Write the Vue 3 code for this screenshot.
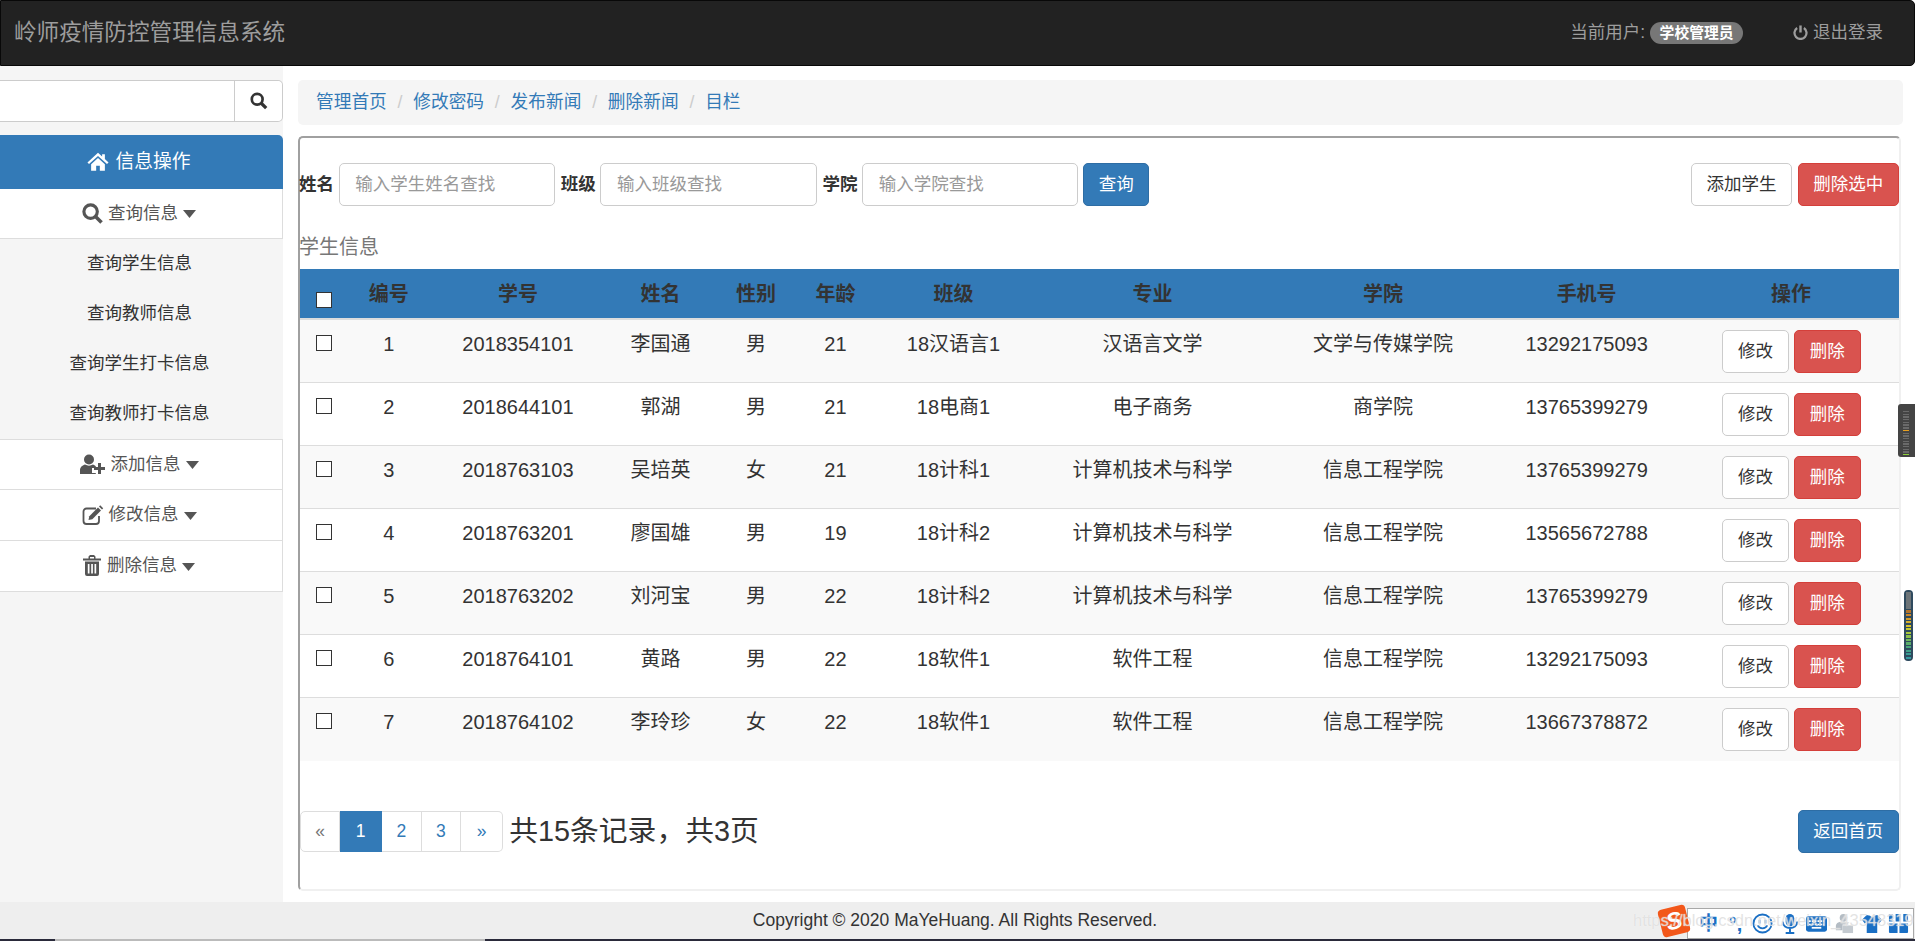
<script setup>
const crumbs = ['管理首页', '修改密码', '发布新闻', '删除新闻', '目栏']
const subItems = ['查询学生信息', '查询教师信息', '查询学生打卡信息', '查询教师打卡信息']
const heads = ['编号', '学号', '姓名', '性别', '年龄', '班级', '专业', '学院', '手机号', '操作']
const widths = [43.6, 90.2, 168.4, 116.6, 74.4, 84.6, 151.6, 246.2, 214.8, 192.6, 216]
const rows = [
  [1, '2018354101', '李国通', '男', 21, '18汉语言1', '汉语言文学', '文学与传媒学院', '13292175093'],
  [2, '2018644101', '郭湖', '男', 21, '18电商1', '电子商务', '商学院', '13765399279'],
  [3, '2018763103', '吴培英', '女', 21, '18计科1', '计算机技术与科学', '信息工程学院', '13765399279'],
  [4, '2018763201', '廖国雄', '男', 19, '18计科2', '计算机技术与科学', '信息工程学院', '13565672788'],
  [5, '2018763202', '刘河宝', '男', 22, '18计科2', '计算机技术与科学', '信息工程学院', '13765399279'],
  [6, '2018764101', '黄路', '男', 22, '18软件1', '软件工程', '信息工程学院', '13292175093'],
  [7, '2018764102', '李玲珍', '女', 22, '18软件1', '软件工程', '信息工程学院', '13667378872']
]
const meter1 = [0,1,2,3,4,5,6,7,8,9,10,11,12,13,14,15,16].map(i => i === 7 ? '#e8a020' : i === 16 ? '#8ccf3a' : '#6a6a6a')
const meter2 = ['#b5742a','#c9852a','#d29a2a','#d6ad2a','#d6c22a','#c4c92f','#a8c83a','#8cc04a','#6fb85a','#5aae6a','#48a67a','#3ea088','#389c94','#349aa0']
</script>

<template>
  <div class="page">
    <header class="topbar">
      <div class="brand">岭师疫情防控管理信息系统</div>
      <div class="user">当前用户:<span class="badge">学校管理员</span></div>
      <div class="logout">
        <svg class="power" viewBox="0 0 16 16"><path d="M4.4 3.2a6.4 6.4 0 1 0 7.2 0" fill="none" stroke="#9d9d9d" stroke-width="2.4"/><path d="M8 0.500v7.500" stroke="#9d9d9d" stroke-width="2.600"/></svg>
        退出登录
      </div>
    </header>

    <div class="body">
      <aside class="side">
        <div class="side-inner">
          <div class="side-search">
            <input class="side-input" type="text" />
            <button class="side-btn">
              <svg class="ic-s" viewBox="0 0 20 20"><circle cx="8" cy="8" r="6" fill="none" stroke="#333" stroke-width="3"/><path d="M12.5 12.5L18 18" stroke="#333" stroke-width="3.6"/></svg>
            </button>
          </div>
          <div class="side-head">
            <svg class="ic-home" viewBox="0 0 24 20"><path fill="#fff" d="M12 0.5L0.5 11l1.7 1.8L12 4l9.8 8.8 1.7-1.8-4-3.7V2h-3v2.6z"/><path fill="#fff" d="M4.5 13L12 6.2 19.5 13v7H14v-5.5h-4V20H4.5z"/></svg>
            信息操作
          </div>
          <div class="side-row">
            <svg class="ic-q" viewBox="0 0 20 20"><circle cx="8.2" cy="8.2" r="6.4" fill="none" stroke="#555" stroke-width="3"/><path d="M12.6 12.6L18.6 18.6" stroke="#555" stroke-width="3.4"/></svg>
            查询信息
            <svg class="caret" viewBox="0 0 13 8"><path d="M0 0h13L6.5 8z" fill="#555"/></svg>
          </div>
          <div class="side-sub" v-for="s in subItems" :key="s">{{ s }}</div>
          <div class="side-row tall first">
            <svg class="ic-add" viewBox="0 0 26 20"><circle cx="9" cy="5.5" r="5" fill="#555"/><path fill="#555" d="M0 20v-4c0-3 3-5 5-5.5 2.500 1.500 5.500 1.500 8 0 1 .3 2 1 2.800 1.800V14H12v5h3.800v1z"/><path d="M14 14.500h11M19.500 9v11" stroke="#555" stroke-width="3"/></svg>
            添加信息
            <svg class="caret" viewBox="0 0 13 8"><path d="M0 0h13L6.500 8z" fill="#555"/></svg>
          </div>
          <div class="side-row tall">
            <svg class="ic-edit" viewBox="0 0 22 20"><path d="M14 3.500H4.500a3 3 0 0 0-3 3v9.500a3 3 0 0 0 3 3H14a3 3 0 0 0 3-3v-5" fill="none" stroke="#555" stroke-width="1.800"/><path fill="#555" d="M6.500 15l.8-3.800L16 2.500l3 3-8.700 8.700z"/><path fill="#555" d="M17 1.500l1.200-1.200 3 3L20 4.500z"/></svg>
            修改信息
            <svg class="caret" viewBox="0 0 13 8"><path d="M0 0h13L6.500 8z" fill="#555"/></svg>
          </div>
          <div class="side-row tall">
            <svg class="ic-trash" viewBox="0 0 18 21"><path fill="#555" d="M0 3.500h5.500V1.500L7 0h4l1.500 1.500v2H18v2H0zM7 3.500h4V2H7z"/><path fill="#555" fill-rule="evenodd" d="M2 6.500h14V19a2 2 0 0 1-2 2H4a2 2 0 0 1-2-2zM4.800 9v9.500h1.700V9zM8.200 9v9.500h1.700V9zM11.500 9v9.500h1.700V9z"/></svg>
            删除信息
            <svg class="caret" viewBox="0 0 13 8"><path d="M0 0h13L6.500 8z" fill="#555"/></svg>
          </div>
        </div>
      </aside>

      <main class="main">
        <nav class="crumb">
          <template v-for="(c, i) in crumbs" :key="c">
            <span v-if="i" class="sep">/</span>
            <a class="link">{{ c }}</a>
          </template>
        </nav>

        <section class="panel">
          <div class="filters">
            <label class="lab">姓名</label>
            <input class="field" placeholder="输入学生姓名查找" />
            <label class="lab">班级</label>
            <input class="field" placeholder="输入班级查找" />
            <label class="lab">学院</label>
            <input class="field" placeholder="输入学院查找" />
            <button class="btn primary query">查询</button>
            <button class="btn plain wide push">添加学生</button>
            <button class="btn danger wide">删除选中</button>
          </div>

          <div class="title">学生信息</div>

          <table class="grid">
            <colgroup>
              <col v-for="(w, i) in widths" :key="i" :style="{ width: w + 'px' }" />
            </colgroup>
            <thead>
              <tr>
                <th class="cb-cell"><input class="cb head-cb" type="checkbox" /></th>
                <th v-for="h in heads" :key="h">{{ h }}</th>
              </tr>
            </thead>
            <tbody>
              <tr v-for="r in rows" :key="r[0]">
                <td class="cb-cell"><input class="cb" type="checkbox" /></td>
                <td v-for="(v, i) in r" :key="i">{{ v }}</td>
                <td>
                  <div class="ops">
                    <button class="btn plain op">修改</button>
                    <button class="btn danger op">删除</button>
                  </div>
                </td>
              </tr>
            </tbody>
          </table>

          <div class="bottom">
            <ul class="pager">
              <li class="muted">«</li>
              <li class="on">1</li>
              <li>2</li>
              <li>3</li>
              <li>»</li>
            </ul>
            <span class="total">共15条记录，共3页</span>
            <button class="btn primary wide push">返回首页</button>
          </div>
        </section>
      </main>
    </div>

    <footer class="foot">
      <div class="copy">Copyright © 2020 MaYeHuang. All Rights Reserved.</div>
      <div class="strip"><span class="s1"></span><span class="s2"></span><span class="s3"></span></div>
    </footer>

    <div class="meter m1"><i v-for="(c, i) in meter1" :key="i" :style="{ background: c }"></i></div>
    <div class="meter m2"><b></b><i v-for="(c, i) in meter2" :key="i" :style="{ background: c }"></i></div>

    <div class="ime">
      <span class="ime-zh">中</span>
      <span class="ime-p">°,</span>
      <svg class="ime-i" viewBox="0 0 22 22"><circle cx="11" cy="11" r="9.500" fill="#fff" stroke="#1a6fc4" stroke-width="2"/><path d="M8 7v4M14 7v4" stroke="#1a6fc4" stroke-width="2"/><path d="M6 13c2 4 8 4 10 0" fill="none" stroke="#1a6fc4" stroke-width="1.800"/></svg>
      <svg class="ime-i" viewBox="0 0 22 22"><rect x="7" y="1" width="9" height="13" rx="4.500" fill="#1a6fc4"/><path d="M4 9c0 9 15 9 15 0M11.500 16v4M7 21h9" fill="none" stroke="#1a6fc4" stroke-width="2"/></svg>
      <svg class="ime-k" viewBox="0 0 22 16"><rect width="22" height="16" rx="2.500" fill="#1a6fc4"/><path d="M3 5h16M3 8.500h16" stroke="#fff" stroke-width="1.700" stroke-dasharray="2 1"/><path d="M6 12h10" stroke="#fff" stroke-width="1.800"/></svg>
      <svg class="ime-i" viewBox="0 0 22 22"><circle cx="11" cy="5" r="4" fill="#b4bcc4"/><path d="M3 14c0-4 4-5 8-5s5 1 5 3H10v6H3z" fill="#b4bcc4"/><rect x="10" y="13" width="11" height="8" fill="#c4cad0"/></svg>
      <svg class="ime-i" viewBox="0 0 22 22"><path d="M6 2L1 7l3 4 2-1.500V21h11V9.500l2 1.500 3-4-5-5-3 1a3 3 0 0 1-4.500 0z" fill="#1a6fc4"/></svg>
      <svg class="ime-i" viewBox="0 0 22 22"><path d="M1 1h4v8H1zM8 1h5v8H8zM16 1h5v8h-5z" fill="#1a6fc4"/><path d="M1 11h9v10H2a1 1 0 0 1-1-1zM12 11h9v9a1 1 0 0 1-1 1h-8z" fill="#1a6fc4"/></svg>
    </div>
    <div class="ime-logo"><span>S</span></div>
    <div class="mark">https://blog.csdn.net/weixin_43548319</div>
  </div>
</template>

<style>
html, body { margin: 0; overflow: hidden; }
</style>

<style scoped>
.page {
  position: relative;
  width: 1915px;
  height: 941px;
  overflow: hidden;
  display: flex;
  flex-direction: column;
  background: #fff;
  color: #333;
  font-family: "Liberation Sans", "Noto Sans CJK SC", sans-serif;
  font-size: 17.5px;
  line-height: 25px;
}
.topbar {
  box-sizing: border-box;
  flex: 0 0 65.7px;
  display: flex;
  align-items: center;
  background: #222;
  border: 1px solid #080808;
  border-radius: 0 5px 5px 0;
  color: #9d9d9d;
}
.brand { margin-left: 13px; font-size: 22.6px; }
.user { margin-left: auto; display: flex; align-items: center; }
.badge {
  box-sizing: border-box;
  height: 22.7px;
  margin-left: 5px;
  padding: 0 9.400px;
  border-radius: 12px;
  background: #777;
  color: #fff;
  font-size: 14.800px;
  font-weight: 700;
  line-height: 22.700px;
}
.logout { margin-left: 50px; margin-right: 31px; display: flex; align-items: center; gap: 5px; }
.power { width: 15px; height: 15px; }

.body { flex: 1; display: flex; min-height: 0; }
.side { flex: 0 0 283px; background: #f5f5f5; overflow: hidden; }
.side-inner { width: 287px; margin-left: -4px; padding-top: 14.300px; }
.side-search { box-sizing: border-box; display: flex; height: 42.300px; margin-bottom: 12.700px; background: #fff; border: 1.250px solid #ccc; border-left: 0; border-radius: 0 5px 5px 0; }
.side-input { flex: 1; min-width: 0; border: 0; background: transparent; padding: 0; }
.side-btn { flex: 0 0 48px; display: flex; align-items: center; justify-content: center; padding: 0; background: #fff; border: 0; border-left: 1.250px solid #ccc; border-radius: 0 5px 5px 0; }
.ic-s { width: 18px; height: 18px; }
.side-head {
  box-sizing: border-box;
  height: 54px;
  padding-right: 2px;
  display: flex;
  align-items: center;
  justify-content: center;
  gap: 7px;
  background: #337ab7;
  color: #fff;
  border-radius: 0 5px 0 0;
  font-size: 18.750px;
}
.ic-home { width: 22px; height: 19px; }
.side-row {
  box-sizing: border-box;
  height: 49.600px;
  display: flex;
  align-items: center;
  justify-content: center;
  gap: 5px;
  background: #fff;
  color: #555;
  border-right: 1px solid #ddd;
  border-bottom: 1.250px solid #ddd;
}
.side-row.tall { height: 51px; }
.side-row.first { border-top: 1.250px solid #ddd; }
.ic-q { width: 21px; height: 21px; }
.ic-add { width: 26px; height: 20px; }
.ic-edit { width: 22px; height: 20px; }
.ic-trash { width: 18px; height: 21px; margin-right: 1px; }
.caret { width: 13px; height: 8px; margin-top: 2px; }
.side-sub { height: 50px; line-height: 48px; text-align: center; color: #333; }

.main { flex: 1; min-width: 0; box-sizing: border-box; padding: 14.300px 12px 0 15px; }
.crumb {
  box-sizing: border-box;
  height: 45px;
  margin-bottom: 11px;
  padding-left: 18px;
  display: flex;
  align-items: center;
  background: #f5f5f5;
  border-radius: 5px;
  font-size: 17.700px;
}
.link { color: #337ab7; }
.sep { color: #ccc; padding: 0 10.800px; }
.panel {
  box-sizing: border-box;
  height: 755px;
  margin-right: 2px;
  padding-top: 25.300px;
  border: 2px solid;
  border-color: #a0a0a0 #f0f0f0 #f0f0f0 #a0a0a0;
  border-radius: 5px;
}
.filters { display: flex; align-items: center; height: 42.500px; margin-left: -1px; }
.lab { font-weight: 700; color: #333; margin-right: 4.600px; }
.field {
  box-sizing: border-box;
  width: 216.200px;
  height: 42.500px;
  margin-right: 6px;
  padding: 0 15.600px;
  border: 1.250px solid #ccc;
  border-radius: 5px;
  background: #fff;
  color: #555;
  font: inherit;
  outline: 0;
}
.field::placeholder { color: #999; }
.btn {
  box-sizing: border-box;
  height: 42.500px;
  padding: 0;
  border: 1.250px solid #ccc;
  border-radius: 5px;
  font: inherit;
  line-height: 1;
}
.plain { background: #fff; color: #333; }
.danger { background: #d9534f; border-color: #d43f3a; color: #fff; }
.primary { background: #337ab7; border-color: #2e6da4; color: #fff; }
.query { width: 66px; margin-left: -1px; }
.wide { width: 101.500px; }
.wide + .wide { margin-left: 5.300px; }
.push { margin-left: auto; }

.title { margin: 23.200px 0 4px -1px; height: 36px; line-height: 36px; font-size: 20px; color: #777; }

.grid { width: 1599px; table-layout: fixed; border-collapse: separate; border-spacing: 0; font-size: 20px; }
.grid th {
  box-sizing: border-box;
  height: 51.200px;
  padding: 2px 0 0;
  background: #337ab7;
  color: #333;
  font-size: 20px;
  font-weight: 700;
  text-align: center;
  vertical-align: middle;
  border-bottom: 2.500px solid #ddd;
}
.grid th.cb-cell { padding: 23px 0 0 16px; vertical-align: top; }
.grid td {
  box-sizing: border-box;
  height: 63px;
  padding: 10px 0 9.500px;
  line-height: 29px;
  text-align: center;
  vertical-align: top;
  border-bottom: 1px solid #ddd;
}
.grid tbody tr:nth-child(odd) td { background: #f9f9f9; }
.grid tbody tr:last-child td { border-bottom: 0; }
.grid td.cb-cell { padding-left: 16px; text-align: left; }
.cb {
  appearance: none;
  display: block;
  box-sizing: border-box;
  width: 16px;
  height: 16px;
  margin: 5px 0 0;
  background: #fff;
  border: 1.250px solid #333;
}
.cb.head-cb { margin: 0; }
.ops { display: flex; justify-content: center; gap: 5.300px; padding-left: 1px; }
.op { width: 66.500px; font-size: 17.500px; }

.bottom { display: flex; align-items: center; margin-top: 49px; }
.pager { display: flex; margin: 0; padding: 0; list-style: none; height: 41.700px; }
.pager li {
  box-sizing: border-box;
  width: 39.600px;
  height: 41.700px;
  line-height: 39px;
  text-align: center;
  color: #337ab7;
  border: 1.250px solid #ddd;
  border-left-width: 0;
}
.pager li.muted { width: 40px; border-left-width: 1.250px; color: #777; border-radius: 5px 0 0 5px; }
.pager li.on { width: 42px; background: #337ab7; border-color: #337ab7; color: #fff; }
.pager li:last-child { width: 42px; border-radius: 0 5px 5px 0; }
.total { margin-left: 6px; font-size: 28.800px; line-height: 40px; color: #333; }

.foot { flex: 0 0 39.300px; display: flex; flex-direction: column; background: #eee; }
.copy { flex: 1; padding-right: 5px; line-height: 37px; text-align: center; color: #333; font-size: 17.500px; }
.strip { display: flex; height: 2px; }
.s1 { width: 55px; background: #2a2a3a; }
.s2 { width: 430px; background: #bbb; }
.s3 { flex: 1; background: #2a2a3a; }

.meter { position: absolute; box-sizing: border-box; display: flex; flex-direction: column; align-items: center; }
.m1 { left: 1897.500px; top: 404px; width: 17.500px; height: 53px; padding-top: 7px; gap: 1.300px; background: #444; border-radius: 3px 0 0 3px; }
.m1 i { display: block; width: 6px; height: 1.400px; }
.m2 { left: 1904px; top: 590px; width: 9px; height: 71px; padding: 2px 0; gap: 1.300px; background: #2f4a5e; border-radius: 4px; }
.m2 b { display: block; width: 5px; height: 18px; background: #6d7478; }
.m2 i { display: block; width: 5px; height: 2.400px; }

.ime {
  position: absolute;
  left: 1687px;
  top: 908px;
  width: 227px;
  height: 31px;
  box-sizing: border-box;
  padding-left: 10px;
  display: flex;
  align-items: center;
  gap: 6.100px;
  background: #fff;
  border: 1px solid #a8a8a8;
}
.ime-zh { width: 21px; color: #1a6fc4; font-size: 19px; font-weight: 700; line-height: 1; text-align: center; }
.ime-p { width: 21px; color: #1a6fc4; font-size: 20px; font-weight: 700; line-height: 1; text-align: center; }
.ime-i { width: 21px; height: 21px; }
.ime-k { width: 21px; height: 16px; }
.ime-logo {
  position: absolute;
  left: 1660px;
  top: 907px;
  width: 28px;
  height: 28px;
  display: flex;
  align-items: center;
  justify-content: center;
  background: #f2571a;
  border-radius: 4px;
  transform: rotate(-14deg);
  color: #fff;
  font-size: 24px;
  font-weight: 700;
  font-style: italic;
  line-height: 1;
}
.mark {
  position: absolute;
  left: 1633px;
  top: 908px;
  color: rgba(200, 200, 200, 0.5);
  font-size: 16.500px;
  text-shadow: 0 0 1px #fff;
  white-space: nowrap;
  pointer-events: none;
}
</style>
